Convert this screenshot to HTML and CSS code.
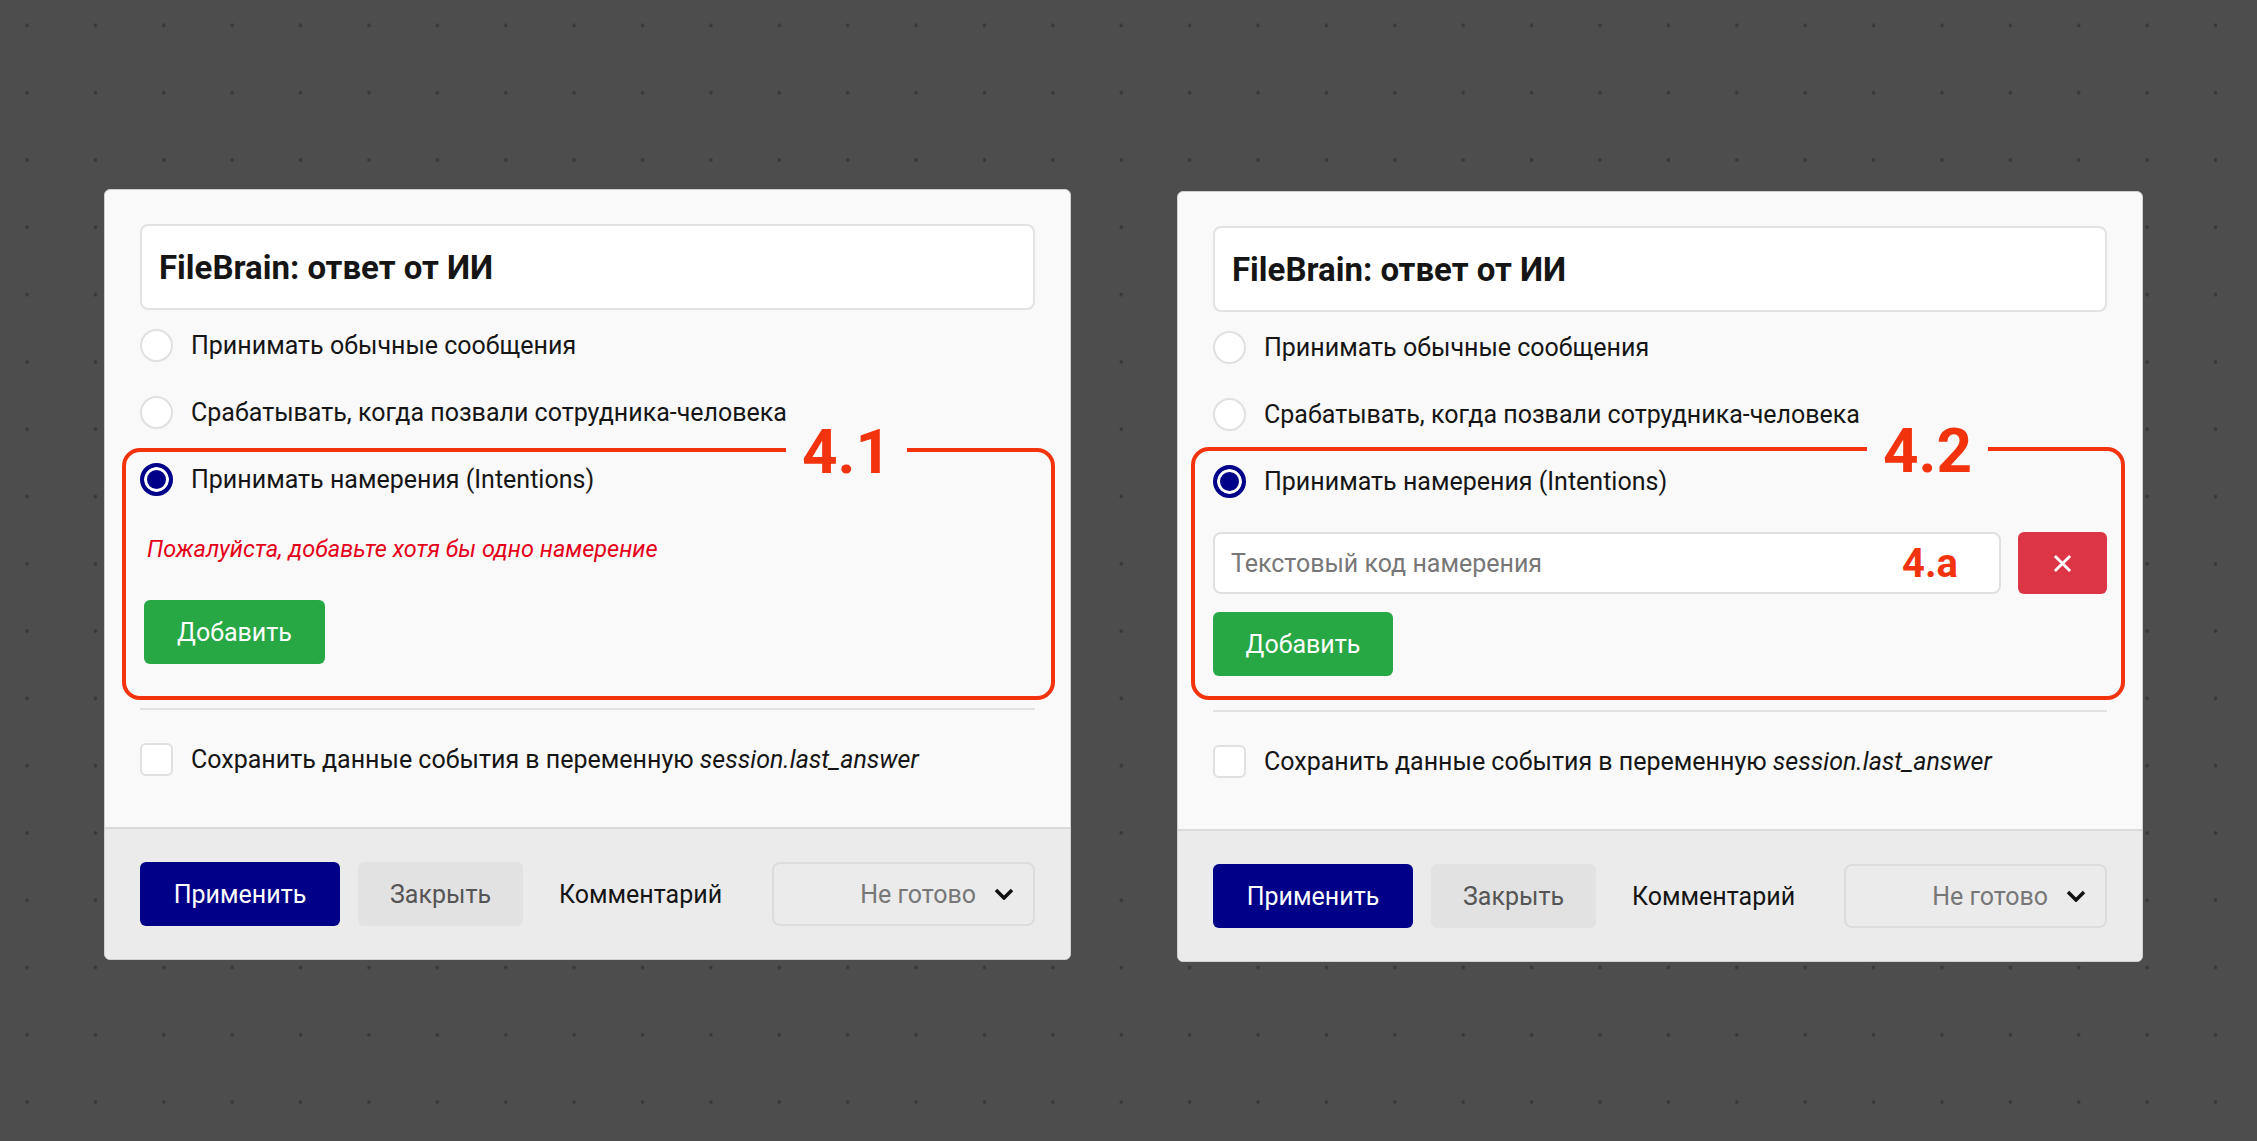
FILE: index.html
```html
<!DOCTYPE html>
<html lang="ru">
<head>
  <meta charset="utf-8">
  <title>FileBrain: ответ от ИИ</title>
  <link rel="stylesheet" href="styles.css">
</head>
<body>
<div class="board">

  <!-- 4.1: no intentions yet -->
  <div class="panel">
    <div class="panel-body">
      <div class="title-input">FileBrain: ответ от ИИ</div>
      <div class="option"><span class="radio"></span><span>Принимать обычные сообщения</span></div>
      <div class="option"><span class="radio"></span><span>Срабатывать, когда позвали сотрудника-человека</span></div>
      <div class="intents intents-empty">
        <div class="option"><span class="radio checked"></span><span>Принимать намерения (Intentions)</span></div>
        <div class="error">Пожалуйста, добавьте хотя бы одно намерение</div>
        <button class="btn btn-add">Добавить</button>
        <div class="mark"><span class="mark-label">4.1</span></div>
      </div>
      <div class="separator"></div>
      <div class="option check-row"><span class="checkbox"></span><span>Сохранить данные события в переменную <i>session.last_answer</i></span></div>
    </div>
    <div class="panel-footer">
      <button class="btn btn-apply">Применить</button>
      <button class="btn btn-close">Закрыть</button>
      <span class="comment">Комментарий</span>
      <div class="select">
        <span>Не готово</span>
        <svg class="chevron" viewBox="0 0 20 12"><path d="M2 2L10 10L18 2"/></svg>
      </div>
    </div>
  </div>

  <!-- 4.2: one intention row -->
  <div class="panel panel-second">
    <div class="panel-body">
      <div class="title-input">FileBrain: ответ от ИИ</div>
      <div class="option"><span class="radio"></span><span>Принимать обычные сообщения</span></div>
      <div class="option"><span class="radio"></span><span>Срабатывать, когда позвали сотрудника-человека</span></div>
      <div class="intents intents-list">
        <div class="option"><span class="radio checked"></span><span>Принимать намерения (Intentions)</span></div>
        <div class="intent-row">
          <div class="intent-input">
            <span>Текстовый код намерения</span>
            <span class="note">4.a</span>
          </div>
          <button class="btn btn-remove">
            <svg class="cross" viewBox="0 0 20 20"><path d="M2 2L18 18M18 2L2 18"/></svg>
          </button>
        </div>
        <button class="btn btn-add">Добавить</button>
        <div class="mark mark-2"><span class="mark-label">4.2</span></div>
      </div>
      <div class="separator"></div>
      <div class="option check-row"><span class="checkbox"></span><span>Сохранить данные события в переменную <i>session.last_answer</i></span></div>
    </div>
    <div class="panel-footer">
      <button class="btn btn-apply">Применить</button>
      <button class="btn btn-close">Закрыть</button>
      <span class="comment">Комментарий</span>
      <div class="select">
        <span>Не готово</span>
        <svg class="chevron" viewBox="0 0 20 12"><path d="M2 2L10 10L18 2"/></svg>
      </div>
    </div>
  </div>

</div>
</body>
</html>
```

FILE: styles.css
```css
* {
  box-sizing: border-box;
}

body {
  margin: 0;
  height: 1141px;
  overflow: hidden;
  background-color: #4d4d4d;
  background-image: radial-gradient(circle, #383838 1.4px, transparent 2.2px);
  background-size: 68.4px 67.3px;
  background-position: -7.2px -8.25px;
  font-family: Roboto, "Liberation Sans", sans-serif;
  color: #151515;
}

.board {
  display: flex;
  align-items: flex-start;
  gap: 106px;
  padding: 189px 0 0 104px;
}

.panel {
  width: 967px;
  background: #f9f9f9;
  border: 1px solid #cfcfcf;
  border-radius: 6px;
}

.panel-second {
  width: 966px;
  margin-top: 2px;
}

.panel-body {
  padding: 34px 35px 51px;
}

.title-input {
  display: flex;
  align-items: center;
  height: 86px;
  margin-bottom: 19px;
  padding-left: 17px;
  background: #fff;
  border: 2px solid #e2e2e2;
  border-radius: 8px;
  font-size: 33px;
  font-weight: 700;
}

.option {
  display: flex;
  align-items: center;
  gap: 18px;
  height: 33px;
  margin-bottom: 34px;
  font-size: 25px;
}

.radio,
.checkbox {
  flex: none;
  width: 33px;
  height: 33px;
  background: #fff;
  border: 2px solid #e0e0e0;
}

.radio {
  border-radius: 50%;
}

.radio.checked {
  background: #000088;
  border: 4px solid #000088;
  box-shadow: inset 0 0 0 3px #fff;
}

.checkbox {
  border-radius: 6px;
}

/* intentions block */
.intents {
  position: relative;
}

.intents .option {
  margin-bottom: 0;
}

.intents-empty {
  padding-bottom: 44px;
}

.intents-list {
  padding-bottom: 34px;
}

.error {
  margin: 36px 0 0 7px;
  font-size: 23.5px;
  line-height: 34px;
  font-style: italic;
  color: #e5001a;
}

.btn {
  height: 64px;
  padding: 0;
  border: 0;
  border-radius: 6px;
  font-family: inherit;
  font-size: 25px;
}

.btn-add {
  display: block;
  width: 181px;
  margin: 34px 0 0 4px;
  background: #28a745;
  color: #fff;
}

.intents-list .btn-add {
  width: 180px;
  margin: 18px 0 0;
}

.intent-row {
  display: flex;
  gap: 17px;
  height: 62px;
  margin-top: 34px;
}

.intent-input {
  flex: 1;
  display: flex;
  align-items: center;
  padding-left: 16px;
  background: #fff;
  border: 2px solid #e0e0e0;
  border-radius: 8px;
  font-size: 25px;
  color: #777;
}

.btn-remove {
  display: flex;
  align-items: center;
  justify-content: center;
  width: 89px;
  height: 62px;
  background: #dc3545;
}

.cross {
  width: 19px;
  height: 19px;
  stroke: #fff;
  stroke-width: 3;
  fill: none;
}

.separator {
  height: 2px;
  background: #e1e1e1;
}

.check-row {
  margin: 33px 0 0;
}

/* footer */
.panel-footer {
  display: flex;
  align-items: center;
  padding: 33px 35px;
  background: #ebebeb;
  border-top: 2px solid #dadada;
  border-radius: 0 0 5px 5px;
}

.btn-apply {
  width: 200px;
  background: #000088;
  color: #fff;
}

.btn-close {
  width: 165px;
  margin-left: 18px;
  background: #e2e2e2;
  color: #555;
}

.comment {
  margin-left: 36px;
  font-size: 25px;
}

.select {
  display: flex;
  align-items: center;
  justify-content: flex-end;
  gap: 18px;
  width: 263px;
  height: 64px;
  margin-left: auto;
  padding-right: 19px;
  background: #ebebeb;
  border: 2px solid #dcdcdc;
  border-radius: 8px;
  font-size: 25px;
  color: #777;
}

.chevron {
  width: 20px;
  height: 12px;
  stroke: #111;
  stroke-width: 3.5;
  fill: none;
}

/* red annotation overlays */
.mark {
  position: absolute;
  top: -15px;
  left: -18px;
  right: -20px;
  bottom: 8px;
  border: 4px solid #f2330d;
  border-radius: 18px;
  pointer-events: none;
}

.mark-2 {
  top: -18px;
  left: -22px;
  right: -18px;
  bottom: 10px;
}

.mark-label {
  position: absolute;
  top: -31px;
  right: 144px;
  padding: 0 16px;
  background: #f9f9f9;
  font-size: 62px;
  line-height: 62px;
  font-weight: 700;
  color: #f2330d;
}

.mark-2 .mark-label {
  right: 133px;
}

.note {
  margin: 0 41px 0 auto;
  font-size: 40px;
  font-weight: 700;
  color: #f2330d;
}
```
